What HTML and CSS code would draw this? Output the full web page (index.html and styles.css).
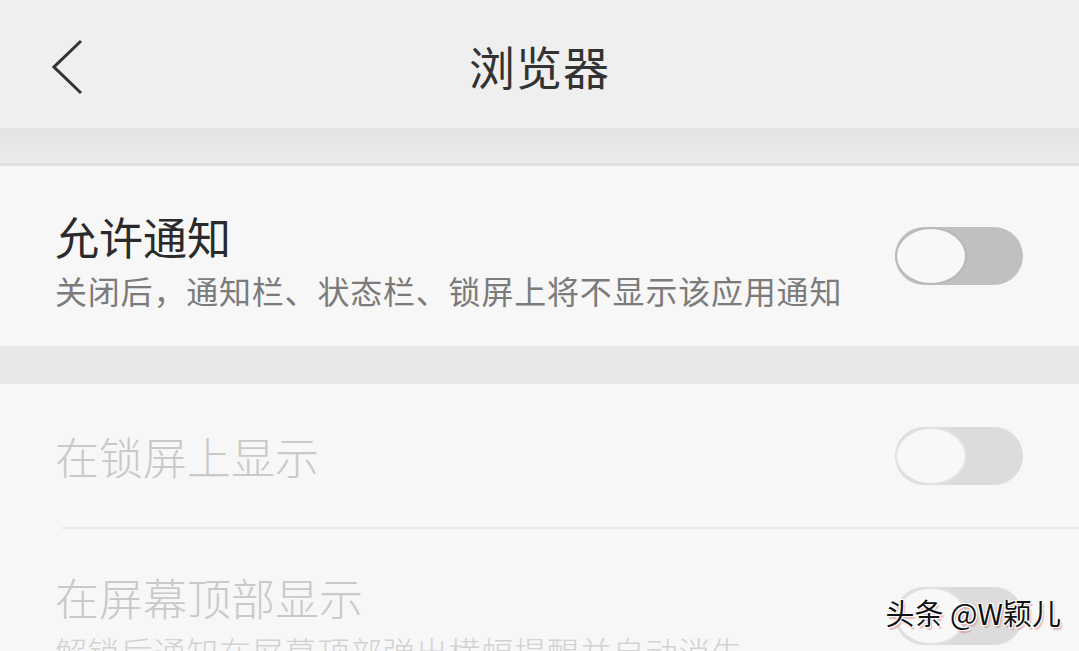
FILE: index.html
```html
<!DOCTYPE html>
<html lang="zh-CN">
<head>
    <meta charset="UTF-8">
    <meta name="viewport" content="width=device-width, initial-scale=1.0">
    <title>浏览器</title>
    <link rel="stylesheet" href="styles.css">
</head>
<body>

<div class="screen">
    <!-- Top bar -->
    <div class="top-bar">
        <div class="back">
            <svg width="34" height="58" viewBox="0 0 34 58">
                <polyline points="29,3 2,29 29,55" fill="none" stroke="#333" stroke-width="3"/>
            </svg>
        </div>
        <div class="page-title">浏览器</div>
        <div></div>
    </div>

    <div class="band band-top"></div>

    <!-- Allow notifications -->
    <div class="group">
        <div class="row row-main">
            <div class="row-text">
                <div class="row-title">允许通知</div>
                <div class="row-sub">关闭后，通知栏、状态栏、锁屏上将不显示该应用通知</div>
            </div>
            <div class="switch">
                <div class="knob"></div>
            </div>
        </div>
    </div>

    <div class="band"></div>

    <!-- Disabled options -->
    <div class="group">
        <div class="row row-single disabled">
            <div class="row-text">
                <div class="row-title">在锁屏上显示</div>
            </div>
            <div class="switch">
                <div class="knob"></div>
            </div>
        </div>
        <div class="divider"></div>
        <div class="row row-double disabled">
            <div class="row-text">
                <div class="row-title">在屏幕顶部显示</div>
                <div class="row-sub">解锁后通知在屏幕顶部弹出横幅提醒并自动消失</div>
            </div>
            <div class="switch">
                <div class="knob"></div>
            </div>
        </div>
    </div>

    <div class="watermark">头条 @W颖儿</div>
</div>

</body>
</html>
```

FILE: styles.css
```css
body {
    margin: 0;
    background-color: #f7f7f7;
    font-family: "Noto Sans CJK SC", "Noto Sans", sans-serif;
    color: #2a2a2a;
}

.screen {
    position: relative;
    width: 1079px;
    height: 651px;
    overflow: hidden;
}

.top-bar {
    height: 128px;
    background-color: #efefef;
    display: grid;
    grid-template-columns: 1fr auto 1fr;
    align-items: center;
}

.back {
    padding-left: 52px;
    display: flex;
    align-items: center;
    padding-top: 6px;
}

.page-title {
    font-size: 46px;
    color: #333;
    letter-spacing: 1px;
    padding-top: 2px;
}

.band {
    height: 38px;
    background-color: #e8e8e8;
}

.band-top {
    height: 35px;
    background: linear-gradient(#e3e3e3, #ececec);
    border-bottom: 3px solid #e0e0e0;
}

.group {
    background-color: #f7f7f7;
}

.row {
    display: flex;
    justify-content: space-between;
    padding: 0 56px 0 55px;
}

.row-main {
    height: 180px;
    align-items: center;
}

.row-main .row-text {
    padding-top: 8px;
}

.row-single {
    height: 143px;
    align-items: center;
}

.row-double {
    height: 174px;
}

.row-double .row-text {
    padding-top: 42px;
}

.row-double .switch {
    align-self: center;
}

.row-title {
    font-size: 44px;
    line-height: 52px;
    color: #2a2a2a;
}

.row-sub {
    font-size: 32px;
    line-height: 40px;
    margin-top: 8px;
    letter-spacing: 0.8px;
    color: #7b7b7b;
}

.disabled .row-title {
    color: #c9c9c9;
    font-weight: 300;
}

.disabled .row-sub {
    color: #d2d2d2;
    font-weight: 300;
}

.divider {
    height: 2px;
    margin-left: 62px;
    background-color: #e8e8e8;
}

/* Toggle switch (off state) */
.switch {
    width: 128px;
    height: 58px;
    border-radius: 29px;
    background-color: #c0c0c0;
    flex-shrink: 0;
    display: flex;
}

.knob {
    width: 72px;
    height: 58px;
    box-sizing: border-box;
    border-radius: 50%;
    background-color: #f8f8f8;
    border: 2px solid #b9b9b9;
}

.disabled .switch {
    background-color: #dcdcdc;
}

.disabled .knob {
    border-color: #e2e2e2;
}

.watermark {
    position: absolute;
    right: 18px;
    top: 592px;
    font-size: 29px;
    line-height: 40px;
    color: #111;
    text-shadow: 1px 1px 0 #fff, -1px -1px 0 #fff, 1px -1px 0 #fff, -1px 1px 0 #fff, 2px 3px 1px rgba(220, 120, 120, 0.5);
}
```
